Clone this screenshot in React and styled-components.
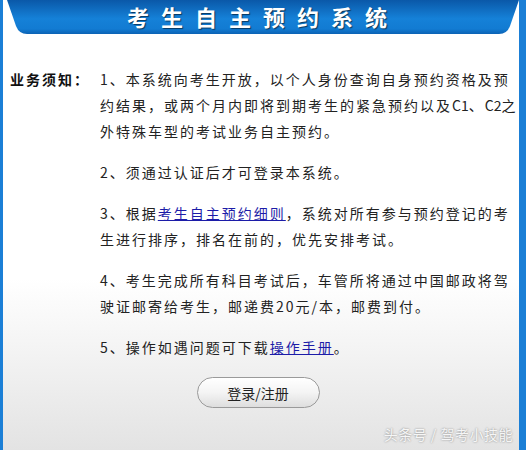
import styled, { createGlobalStyle } from "styled-components";

const Global = createGlobalStyle`
  html, body {
    margin: 0;
    padding: 0;
  }
  body {
    font-family: "Noto Sans CJK SC", "Liberation Sans", sans-serif;
  }
`;

const Page = styled.div`
  position: relative;
  box-sizing: border-box;
  width: 526px;
  height: 450px;
  overflow: hidden;
  border-left: 3px solid #1b7fd6;
  border-right: 7px solid #1b7fd6;
  background: linear-gradient(to bottom, #ffffff 0%, #ffffff 62%, #e3e3e3 100%);
`;

const Header = styled.div`
  margin-left: 4px;
  width: 512px;
  height: 34px;
  display: flex;
  align-items: center;
  justify-content: center;
  background: linear-gradient(to bottom, #0a58a8 0%, #1581d8 55%, #127bd2 85%, #0b62b4 100%);
  clip-path: path("M0 0 H512 L503 26 Q500 34 492 34 H20 Q12 34 9 26 Z");
`;

const Title = styled.h1`
  margin: 0 0 2px;
  color: #fff;
  font-size: 22px;
  font-weight: bold;
  letter-spacing: 12px;
  text-shadow: 1px 1px 1px rgba(0, 0, 0, 0.55);
`;

const Body = styled.div`
  display: grid;
  grid-template-columns: 90px 422px;
  padding: 32px 0 0 7px;
  font-size: 14px;
  line-height: 26px;
  letter-spacing: 2px;
  color: #222;
`;

const Label = styled.div`
  font-weight: bold;
  color: #111;
`;

const Item = styled.p`
  margin: 0 0 15px;
`;

const Latin = styled.span`
  letter-spacing: 0;
`;

const Link = styled.a`
  color: #1c1ca8;
  text-decoration: underline;
`;

const ButtonRow = styled.div`
  display: flex;
  justify-content: center;
  padding-top: 2px;
  padding-right: 6px;
`;

const Button = styled.button`
  width: 123px;
  height: 31px;
  border: 1px solid #9a9a9a;
  border-radius: 16px;
  background: linear-gradient(to bottom, #ffffff 0%, #f4f4f4 50%, #dedede 100%);
  font-family: "Noto Sans CJK SC", sans-serif;
  font-size: 14px;
  color: #222;
  cursor: pointer;
`;

const Watermark = styled.div`
  position: absolute;
  right: 6px;
  bottom: 6px;
  font-size: 14px;
  color: #f6f6f6;
  text-shadow: 0 0 2px rgba(0, 0, 0, 0.45);
  letter-spacing: 0.5px;
`;

export default function App() {
  return (
    <>
      <Global />
      <Page>
        <Header>
          <Title>考生自主预约系统</Title>
        </Header>
        <Body>
          <Label>业务须知：</Label>
          <div>
            <Item>
              1、本系统向考生开放，以个人身份查询自身预约资格及预约结果，或两个月内即将到期考生的紧急预约以及<Latin>C1</Latin>、<Latin>C2</Latin>之外特殊车型的考试业务自主预约。
            </Item>
            <Item>2、须通过认证后才可登录本系统。</Item>
            <Item>
              3、根据<Link href="#">考生自主预约细则</Link>，系统对所有参与预约登记的考生进行排序，排名在前的，优先安排考试。
            </Item>
            <Item>
              4、考生完成所有科目考试后，车管所将通过中国邮政将驾驶证邮寄给考生，邮递费20元/本，邮费到付。
            </Item>
            <Item>
              5、操作如遇问题可下载<Link href="#">操作手册</Link>。
            </Item>
          </div>
        </Body>
        <ButtonRow>
          <Button>登录/注册</Button>
        </ButtonRow>
        <Watermark>头条号 / 驾考小技能</Watermark>
      </Page>
    </>
  );
}
